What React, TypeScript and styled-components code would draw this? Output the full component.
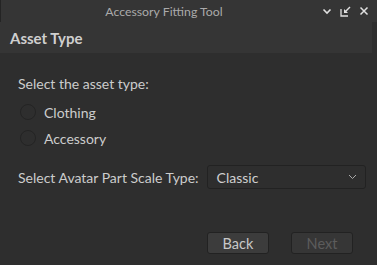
import React, { useState } from "react";
import styled, { createGlobalStyle } from "styled-components";

const Global = createGlobalStyle`
  html, body { margin: 0; padding: 0; background: #2e2e2e; }
  body { font-family: "Lato", "Open Sans", sans-serif; }
  * { box-sizing: border-box; }
`;

const Window = styled.div`
  width: 377px;
  height: 265px;
  background: #2e2e2e;
  display: flex;
  flex-direction: column;
  overflow: hidden;
`;

const TitleBar = styled.div`
  height: 22px;
  background: #353535;
  border-left: 1px solid #242424;
  position: relative;
  display: flex;
  align-items: center;
  justify-content: center;
  padding-right: 50px;
`;

const Title = styled.div`
  color: #aaaaaa;
  font-size: 12.3px;
  font-family: "Lato", sans-serif;
`;

const TitleIcons = styled.div`
  position: absolute;
  right: 8px;
  top: 0;
  height: 22px;
  display: flex;
  align-items: center;
  gap: 8px;
`;

const Body = styled.div`
  flex: 1;
  display: flex;
  flex-direction: column;
  padding-right: 5px;
`;

const Header = styled.div`
  height: 31px;
  background: #353535;
  display: flex;
  align-items: center;
  padding-left: 10px;
  color: #cfcfcf;
  font-weight: 700;
  font-size: 15px;
  font-family: "Lato", sans-serif;
`;

const Content = styled.div`
  padding: 22px 0 0 18px;
  display: flex;
  flex-direction: column;
  font-family: "Lato", sans-serif;
  font-size: 14px;
  color: #cccccc;
`;

const Prompt = styled.div`
  height: 18px;
  line-height: 18px;
`;

const RadioList = styled.div`
  margin-top: 10px;
  display: flex;
  flex-direction: column;
  gap: 8px;
`;

const RadioRow = styled.label`
  display: flex;
  align-items: center;
  gap: 8px;
  height: 18px;
  margin-left: 2px;
  cursor: pointer;
`;

const RadioCircle = styled.span<{ $checked: boolean }>`
  width: 16px;
  height: 16px;
  border-radius: 50%;
  border: 1px solid #242424;
  background: #2e2e2e;
  display: flex;
  align-items: center;
  justify-content: center;
  &::after {
    content: "";
    width: 8px;
    height: 8px;
    border-radius: 50%;
    background: ${(p) => (p.$checked ? "#cccccc" : "transparent")};
  }
`;

const ScaleRow = styled.div`
  margin-top: 18px;
  display: flex;
  align-items: center;
  gap: 8px;
`;

const Dropdown = styled.div`
  width: 159px;
  height: 24px;
  border: 1px solid #222222;
  border-radius: 3px;
  background: #2e2e2e;
  display: flex;
  align-items: center;
  justify-content: space-between;
  padding: 0 8px 0 9px;
  color: #d0d0d0;
`;

const Footer = styled.div`
  margin-top: auto;
  padding: 0 19px 11px 0;
  display: flex;
  justify-content: flex-end;
  gap: 22px;
`;

const Button = styled.button<{ $disabled?: boolean }>`
  width: 62px;
  height: 22px;
  border-radius: 3px;
  border: 1px solid #222222;
  background: ${(p) => (p.$disabled ? "#363636" : "#3c3c3c")};
  color: ${(p) => (p.$disabled ? "#5c5c5c" : "#c8c8c8")};
  font-family: "Lato", sans-serif;
  font-size: 14.5px;
  padding: 0;
`;

export default function App() {
  const [sel, setSel] = useState<string | null>(null);
  return (
    <>
      <Global />
      <Window>
        <TitleBar>
          <Title>Accessory Fitting Tool</Title>
          <TitleIcons>
            <svg width="10" height="10" viewBox="0 0 10 10">
              <path d="M1.5 3.5 L5 7 L8.5 3.5" stroke="#e0e0e0" strokeWidth="1.6" fill="none" />
            </svg>
            <svg width="11" height="11" viewBox="0 0 11 11">
              <path d="M1 3 V10 H8" stroke="#e0e0e0" strokeWidth="1.3" fill="none" />
              <path d="M10 1 L5 6" stroke="#e0e0e0" strokeWidth="1.5" fill="none" />
              <path d="M4 3 V7 H8 Z" fill="#e0e0e0" />
            </svg>
            <svg width="10" height="10" viewBox="0 0 10 10">
              <path d="M1.5 1.5 L8.5 8.5 M8.5 1.5 L1.5 8.5" stroke="#e0e0e0" strokeWidth="1.5" fill="none" />
            </svg>
          </TitleIcons>
        </TitleBar>
        <Body>
          <Header>Asset Type</Header>
          <Content>
            <Prompt>Select the asset type:</Prompt>
            <RadioList>
              {["Clothing", "Accessory"].map((t) => (
                <RadioRow key={t} onClick={() => setSel(t)}>
                  <RadioCircle $checked={sel === t} />
                  {t}
                </RadioRow>
              ))}
            </RadioList>
            <ScaleRow>
              <span>Select Avatar Part Scale Type:</span>
              <Dropdown>
                <span>Classic</span>
                <svg width="9" height="6" viewBox="0 0 9 6">
                  <path d="M1 1 L4.5 4.5 L8 1" stroke="#aaaaaa" strokeWidth="1" fill="none" />
                </svg>
              </Dropdown>
            </ScaleRow>
          </Content>
          <Footer>
            <Button>Back</Button>
            <Button $disabled>Next</Button>
          </Footer>
        </Body>
      </Window>
    </>
  );
}
